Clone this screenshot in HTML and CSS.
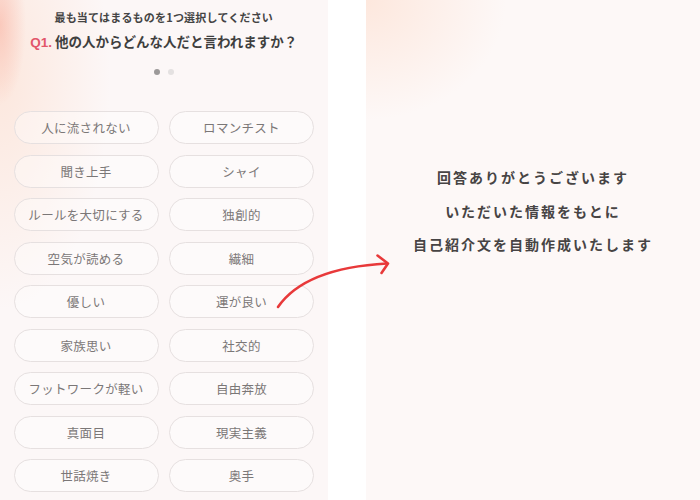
FILE: index.html
```html
<!DOCTYPE html>
<html lang="ja">
<head>
<meta charset="utf-8">
<title>質問</title>
<link rel="stylesheet" href="styles.css">
</head>
<body>
<div class="page">
  <section class="quiz">
    <p class="lead">最も当てはまるものを1つ選択してください</p>
    <h1 class="question"><span class="qnum">Q1.</span> 他の人からどんな人だと言われますか？</h1>
    <div class="dots"><span class="dot active"></span><span class="dot"></span></div>
    <div class="options">
      <button class="opt">人に流されない</button>
      <button class="opt">ロマンチスト</button>
      <button class="opt">聞き上手</button>
      <button class="opt">シャイ</button>
      <button class="opt">ルールを大切にする</button>
      <button class="opt">独創的</button>
      <button class="opt">空気が読める</button>
      <button class="opt">繊細</button>
      <button class="opt">優しい</button>
      <button class="opt">運が良い</button>
      <button class="opt">家族思い</button>
      <button class="opt">社交的</button>
      <button class="opt">フットワークが軽い</button>
      <button class="opt">自由奔放</button>
      <button class="opt">真面目</button>
      <button class="opt">現実主義</button>
      <button class="opt">世話焼き</button>
      <button class="opt">奥手</button>
    </div>
  </section>
  <div class="spacer"></div>
  <section class="result">
    <p class="msg">回答ありがとうございます</p>
    <p class="msg">いただいた情報をもとに</p>
    <p class="msg">自己紹介文を自動作成いたします</p>
  </section>
  <svg class="arrow" width="130" height="70" viewBox="270 250 130 70" fill="none" stroke="#e8393a" stroke-width="2.6" stroke-linecap="round" stroke-linejoin="round">
    <path d="M278 307 Q305 268 387 263.5"/>
    <path d="M377.5 255.5 L388 263.5 L381.5 273"/>
  </svg>
</div>
</body>
</html>
```

FILE: styles.css
```css
html, body {
  margin: 0;
  padding: 0;
  background: #ffffff;
}
body {
  font-family: "Noto Sans CJK JP", "Noto Sans", "Liberation Sans", sans-serif;
  color: #444;
}
.page {
  position: relative;
  width: 700px;
  height: 500px;
  overflow: hidden;
  display: flex;
}
.quiz {
  width: 328px;
  flex: none;
  box-sizing: border-box;
  padding: 0 14px 0 13.5px;
  display: flex;
  flex-direction: column;
  align-items: center;
  background:
    radial-gradient(ellipse 26px 80px at 0px 25px, rgba(248, 160, 140, 0.45), rgba(248, 160, 140, 0) 100%),
    radial-gradient(ellipse 110px 230px at 0px 80px, rgba(252, 212, 190, 0.45), rgba(252, 212, 190, 0) 100%),
    #fcf7f7;
}
.lead {
  margin: 10px 0 0;
  height: 14px;
  font-size: 11px;
  line-height: 14px;
  font-weight: 700;
  color: #444;
  letter-spacing: 0.2px;
}
.question {
  margin: 7px 0 0;
  height: 20px;
  font-size: 13.5px;
  line-height: 20px;
  font-weight: 700;
  color: #3f3f3f;
}
.qnum {
  color: #e2566a;
  font-family: "Liberation Sans", "Noto Sans CJK JP", sans-serif;
}
.dots {
  margin-top: 18px;
  height: 6px;
  display: flex;
  gap: 8px;
}
.dot {
  width: 6px;
  height: 6px;
  border-radius: 50%;
  background: #e4e1e1;
}
.dot.active {
  background: #9c9999;
}
.options {
  margin-top: 36px;
  align-self: flex-start;
  display: grid;
  grid-template-columns: 145px 145px;
  grid-auto-rows: 33px;
  column-gap: 10.5px;
  row-gap: 10.5px;
}
.opt {
  font-family: inherit;
  font-size: 12.5px;
  font-weight: 400;
  color: #7b7777;
  background: rgba(255, 255, 255, 0.35);
  border: 1px solid #e6e0e0;
  border-radius: 17px;
  padding: 0;
  letter-spacing: 0.3px;
}
.spacer {
  width: 38px;
  flex: none;
  background: #ffffff;
}
.result {
  flex: 1;
  box-sizing: border-box;
  padding-top: 161px;
  display: flex;
  flex-direction: column;
  align-items: center;
  background:
    radial-gradient(ellipse 140px 120px at 0px 0px, rgba(253, 218, 200, 0.55), rgba(253, 218, 200, 0) 100%),
    #fdf8f7;
}
.msg {
  margin: 0;
  font-size: 14px;
  line-height: 33.5px;
  font-weight: 700;
  letter-spacing: 2px;
  color: #474444;
}
.arrow {
  position: absolute;
  left: 270px;
  top: 250px;
}
```
